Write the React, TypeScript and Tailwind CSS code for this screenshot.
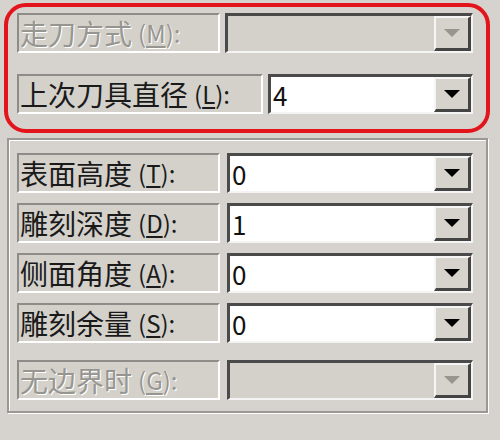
import React from 'react';

const font = { fontFamily: '"Noto Sans CJK SC", "Noto Sans", sans-serif' };

function Label({ text, k, disabled, w }: { text: string; k: string; disabled?: boolean; w: string }) {
  return (
    <div
      className={`${w} h-[40px] flex items-center pl-[1px] border-t-2 border-l-2 border-t-[#8e8c88] border-l-[#8e8c88] border-b-2 border-r-2 border-b-white border-r-white bg-[#d4d1cb] text-[28px] leading-none whitespace-nowrap ${
        disabled ? 'text-[#979590] [text-shadow:1px_1px_0_#fff]' : 'text-[#1a1a1a]'
      }`}
    >
      <span>{text}</span>
      <span className="ml-[6px] text-[24px]">
        (<u className="underline-offset-[3px]">{k}</u>):
      </span>
    </div>
  );
}

function Combo({ value, disabled, w }: { value?: string; disabled?: boolean; w: string }) {
  return (
    <div
      className={`${w} h-[40px] flex border-t-[3px] border-l-[3px] border-t-[#4a4a4a] border-l-[#4a4a4a] border-b-2 border-r-2 border-b-[#f4f4f4] border-r-[#f4f4f4] ${
        disabled ? 'bg-[#d4d1cb]' : 'bg-white'
      }`}
    >
      <div className="flex-1 flex items-center pl-[2px] text-[26px] leading-none text-[#111]">{value}</div>
      <div className="w-[37px] h-full flex items-center justify-center bg-[#d6d3cd] border-t-2 border-l-2 border-t-[#f5f5f5] border-l-[#f5f5f5] border-b-[3px] border-r-[3px] border-b-[#444] border-r-[#444]">
        <svg width="16" height="8" viewBox="0 0 16 8">
          <polygon points="0,0 16,0 8,8" fill={disabled ? '#979590' : '#000'} />
        </svg>
      </div>
    </div>
  );
}

export default function App() {
  return (
    <div className="w-[500px] h-[440px] bg-[#d6d3ce] overflow-hidden flex flex-col" style={font}>
      {/* highlighted upper section */}
      <div className="ml-[4px] mt-[3px] w-[486px] h-[130px] border-4 border-[#e3141b] rounded-[22px] flex flex-col pl-[9px] pt-[6px] gap-[21px]">
        <div className="flex items-start gap-[5px]">
          <Label text="走刀方式" k="M" disabled w="w-[203px]" />
          <Combo disabled w="w-[248px]" />
        </div>
        <div className="flex items-start gap-[5px]">
          <Label text="上次刀具直径" k="L" w="w-[246px]" />
          <Combo value="4" w="w-[205px]" />
        </div>
      </div>

      {/* lower group */}
      <div className="ml-[7px] mt-[5px] w-[481px] h-[275px] border-2 border-[#9a9894] shadow-[inset_1px_1px_0_#fff,1px_1px_0_#fff] flex flex-col pl-[8px] pt-[13px]">
        <div className="flex flex-col gap-[10px]">
          <div className="flex gap-[7px]">
            <Label text="表面高度" k="T" w="w-[203px]" />
            <Combo value="0" w="w-[246px]" />
          </div>
          <div className="flex gap-[7px]">
            <Label text="雕刻深度" k="D" w="w-[203px]" />
            <Combo value="1" w="w-[246px]" />
          </div>
          <div className="flex gap-[7px]">
            <Label text="侧面角度" k="A" w="w-[203px]" />
            <Combo value="0" w="w-[246px]" />
          </div>
          <div className="flex gap-[7px]">
            <Label text="雕刻余量" k="S" w="w-[203px]" />
            <Combo value="0" w="w-[246px]" />
          </div>
        </div>
        <div className="flex gap-[7px] mt-[17px]">
          <Label text="无边界时" k="G" disabled w="w-[203px]" />
          <Combo disabled w="w-[246px]" />
        </div>
      </div>
    </div>
  );
}
